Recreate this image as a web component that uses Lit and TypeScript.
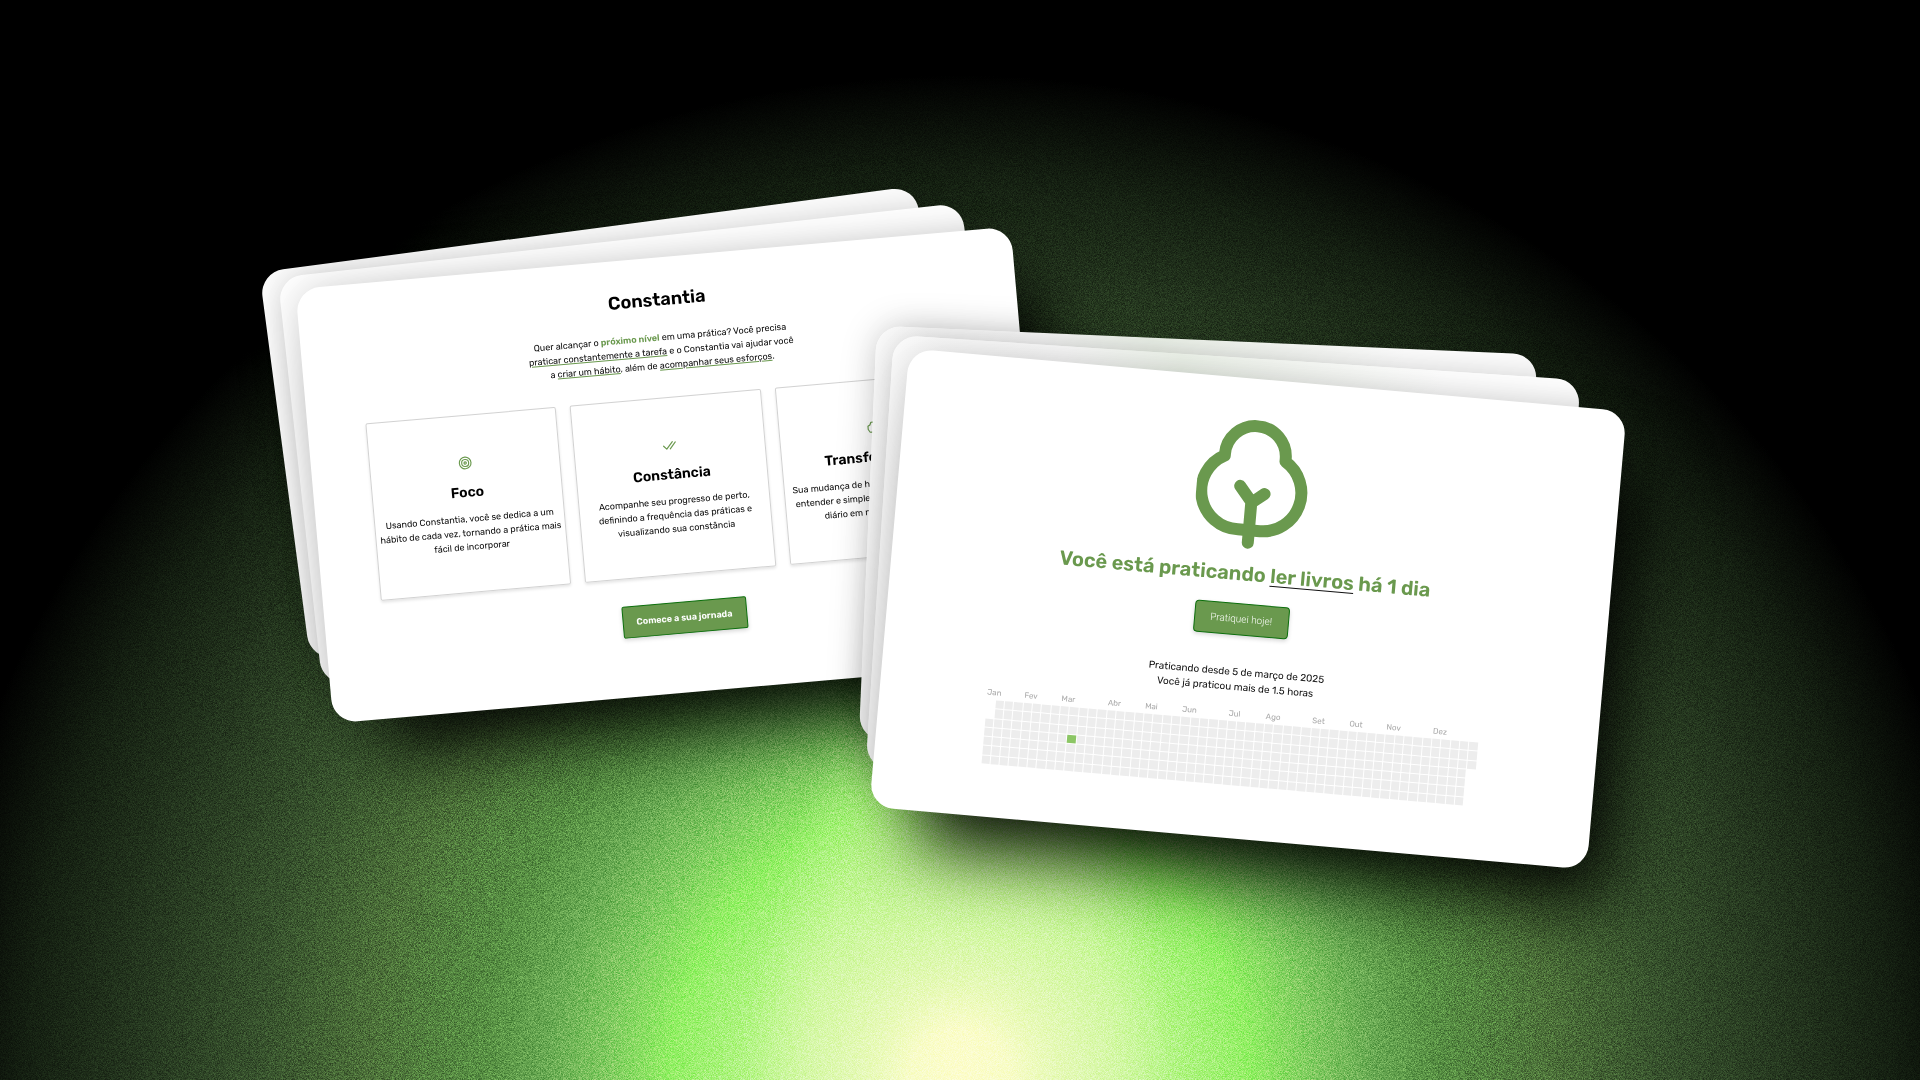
import { LitElement, html, css, svg } from "lit";
import { customElement } from "lit/decorators.js";
import { classMap } from "lit/directives/class-map.js";

const MONTHS: [string, number][] = [
  ["Jan", 0], ["Fev", 4], ["Mar", 8], ["Abr", 13], ["Mai", 17], ["Jun", 21],
  ["Jul", 26], ["Ago", 30], ["Set", 35], ["Out", 39], ["Nov", 43], ["Dez", 48],
];

/* 2025 starts on a Wednesday; weeks run from Monday to Sunday. */
const FIRST_WEEKDAY = 2;
const DAYS = 365;
const PRACTICED = new Set([64]);

@customElement("habit-calendar")
class HabitCalendar extends LitElement {
  static styles = css`
    :host { display: block; width: 493px; font-size: 8px; color: #aaa; }
    .months { display: grid; grid-template-columns: repeat(53, minmax(0, 1fr)); column-gap: 1px; line-height: 10px; }
    .month { white-space: nowrap; grid-row: 1; }
    .days {
      display: grid; grid-template-columns: repeat(53, minmax(0, 1fr)); grid-template-rows: repeat(7, 1fr);
      grid-auto-flow: column; gap: 1px; height: 64px; margin-top: 2px;
    }
    .day { background: #ededed; }
    .first { grid-row-start: 3; }
    .done { background: #8cc665; }
  `;
  render() {
    return html`
      <div class="months">
        ${MONTHS.map(([name, col]) => html`<span class="month" style="grid-column-start:${col + 1}">${name}</span>`)}
      </div>
      <div class="days">
        ${Array.from({ length: DAYS }, (_, i) => html`<i class=${classMap({ day: true, first: i === 0 && FIRST_WEEKDAY === 2, done: PRACTICED.has(i) })}></i>`)}
      </div>`;
  }
}

@customElement("landing-screen")
class LandingScreen extends LitElement {
  static styles = css`
    :host { display: flex; flex-direction: column; align-items: center; padding-top: 31px; text-align: center; color: #0a0a0a; font-size: 9px; line-height: 14px; }
    h1, h2, p { margin: 0; }
    h1 { font-size: 18px; line-height: 22px; font-weight: 600; color: #000; }
    .intro { margin-top: 20px; }
    strong { font-weight: 600; color: #6a994e; }
    u { text-decoration-color: #6a994e; }
    .features { display: grid; grid-template-columns: repeat(3, 1fr); gap: 14px; width: 602px; margin-top: 25px; }
    .feature {
      box-sizing: border-box; display: flex; flex-direction: column; align-items: center; height: 178px;
      padding-top: 40px; border: 1px solid #d2d2d2; border-radius: 2px; box-shadow: 0 2px 3px rgba(0, 0, 0, 0.1);
    }
    .feature svg { width: 14px; height: 14px; fill: none; stroke: #6a994e; stroke-width: 2; stroke-linecap: round; stroke-linejoin: round; }
    h2 { font-size: 14px; line-height: 18px; font-weight: 600; color: #000; margin: 14px 0 10px; }
    .feature p { white-space: nowrap; }
    button {
      margin-top: 27px; width: 125px; height: 32px; padding: 0; border: 1px solid #0b6e0b; border-radius: 2px;
      background: #6a994e; color: #fff; font: inherit; font-weight: 600; box-shadow: 0 2px 4px rgba(0, 0, 0, 0.16);
    }
  `;
  render() {
    return html`
      <h1>Constantia</h1>
      <p class="intro">
        Quer alcançar o <strong>próximo nível</strong> em uma prática? Você precisa<br />
        <u>praticar constantemente a tarefa</u> e o Constantia vai ajudar você<br />
        a <u>criar um hábito</u>, além de <u>acompanhar seus esforços</u>.
      </p>
      <div class="features">
        <section class="feature">
          <svg viewBox="0 0 24 24" aria-hidden="true"><circle cx="12" cy="12" r="10" /><circle cx="12" cy="12" r="6" /><circle cx="12" cy="12" r="2" /></svg>
          <h2>Foco</h2>
          <p>Usando Constantia, você se dedica a um<br />hábito de cada vez, tornando a prática mais<br />fácil de incorporar</p>
        </section>
        <section class="feature">
          <svg viewBox="0 0 24 24" aria-hidden="true"><path d="M2 13l5 5.500L17.500 6.500M13 18.500L22.500 7.500" /></svg>
          <h2>Constância</h2>
          <p>Acompanhe seu progresso de perto,<br />definindo a frequência das práticas e<br />visualizando sua constância</p>
        </section>
        <section class="feature">
          <svg viewBox="0 0 24 24" aria-hidden="true"><path d="M9 20H5.500L2.500 15V9.500L6 7.500L8 3H16L18 7.500L21.500 9.500V15L18.500 20H15" /></svg>
          <h2>Transformação</h2>
          <p>Sua mudança de hábito será mais fácil de<br />entender e simples de acompanhar, com<br />diário em nossa plataforma</p>
        </section>
      </div>
      <button type="button">Comece a sua jornada</button>`;
  }
}

@customElement("habit-screen")
class HabitScreen extends LitElement {
  static styles = css`
    :host { display: flex; flex-direction: column; align-items: center; padding: 41px 12px 0 0; text-align: center; color: #111; }
    .tree { display: block; width: 112px; height: 130px; fill: none; stroke: #6a994e; stroke-width: 12; stroke-linecap: round; stroke-linejoin: round; }
    h1 { margin: 12px 0 18px; font-size: 20px; line-height: 24px; font-weight: 600; color: #6a994e; white-space: nowrap; }
    u { text-decoration-color: #111; text-decoration-thickness: 1px; text-underline-offset: 3px; text-decoration-skip-ink: none; }
    button {
      width: 95px; height: 32px; padding: 0; border: 1px solid #0b6e0b; border-radius: 4px; background: #6a994e; color: #f8fbf6;
      font: 300 10px/14px Roboto, "Open Sans", sans-serif; box-shadow: 0 2px 4px rgba(0, 0, 0, 0.16);
    }
    p { margin: 30px 0 14px; font-size: 10px; line-height: 15px; }
  `;
  render() {
    return html`
      <svg class="tree" viewBox="-56 41 112 130" aria-hidden="true">
        <path d="M-30.500 79V77.500A30.500 30.500 0 0 1 30.500 77.500V80A38.500 38.500 0 0 1 11 151.500H-11A38.500 38.500 0 0 1 -30.500 79Z" />
        <path d="M0 164V124M-12.500 108L0 123M12.500 114L0 124" />
      </svg>
      <h1>Você está praticando <u>ler livros</u> há 1 dia</h1>
      <button type="button">Pratiquei hoje!</button>
      <p>Praticando desde 5 de março de 2025<br />Você já praticou mais de 1.5 horas</p>
      <habit-calendar></habit-calendar>`;
  }
}

@customElement("app-root")
class AppRoot extends LitElement {
  static styles = css`
    :host { display: block; font-family: Rubik, Roboto, "Liberation Sans", sans-serif; }
    .stage {
      position: relative; min-height: 100vh; overflow: hidden; isolation: isolate;
      background:
        radial-gradient(ellipse 11% 40% at 50% 100%, rgba(226, 250, 180, 0) 0%, rgba(226, 250, 180, 0.35) 45%, rgba(226, 250, 180, 0.35) 70%, rgba(226, 250, 180, 0) 100%),
        radial-gradient(ellipse 54% 93% at 50% 100%,
          #fdfdcc 0%, #fdfdcc 5%, #dcf8ae 12%, #b6f588 20%, #92ef64 28%, #80cb60 34%, #68a952 40%, #578f43 46%,
          #4c7039 57%, #36502c 68%, #25371f 79%, #141f11 90%, #000 100%);
    }
    .grain { position: absolute; inset: 0; width: 100%; height: 100%; mix-blend-mode: overlay; opacity: 0.36; }
    .sheet {
      position: absolute; left: calc(50% + var(--x)); top: calc(50% + var(--y)); width: var(--w); height: var(--h);
      transform: translate(-50%, -50%) rotate(var(--r)); border-radius: 24px; background: #fff;
      box-shadow: 0 0 36px rgba(0, 0, 0, 0.18);
    }
    .front { box-shadow: 0 0 36px rgba(0, 0, 0, 0.16), 36px 48px 70px -12px rgba(0, 0, 0, 0.9); }
    .left-back { --x: -347px; --y: -117px; --w: 662px; --h: 391px; --r: -7.5deg; }
    .left-mid { --x: -318px; --y: -96px; --w: 688px; --h: 410px; --r: -6.25deg; }
    .left-front { --x: -288px; --y: -65px; --w: 718px; --h: 436px; --r: -5deg; }
    .right-back { --x: 238px; --y: 7px; --w: 661px; --h: 414px; --r: 2.5deg; }
    .right-mid { --x: 263px; --y: 34px; --w: 688px; --h: 434px; --r: 3.75deg; }
    .right-front { --x: 288px; --y: 69px; --w: 720px; --h: 460px; --r: 5deg; }
    .right-back, .right-mid { background: linear-gradient(to right, #fcfcfc 0%, #fafafa 25%, #eef4eb 42%, #f4f7f2 55%, #fff 80%); }
  `;
  render() {
    return html`
      <main class="stage">
        <svg class="grain" aria-hidden="true">
          <filter id="noise" x="0" y="0" width="100%" height="100%" color-interpolation-filters="sRGB">
            <feTurbulence type="fractalNoise" baseFrequency="1.37" numOctaves="3" />
            <feColorMatrix values="2 0 0 0 -0.5  2 0 0 0 -0.5  2 0 0 0 -0.5  0 0 0 0 1" />
          </filter>
          ${svg`<rect width="100%" height="100%" filter="url(#noise)"></rect>`}
        </svg>
        <div class="sheet left-back"></div>
        <div class="sheet left-mid"></div>
        <div class="sheet front left-front"><landing-screen></landing-screen></div>
        <div class="sheet right-back"></div>
        <div class="sheet right-mid"></div>
        <div class="sheet front right-front"><habit-screen></habit-screen></div>
      </main>`;
  }
}
